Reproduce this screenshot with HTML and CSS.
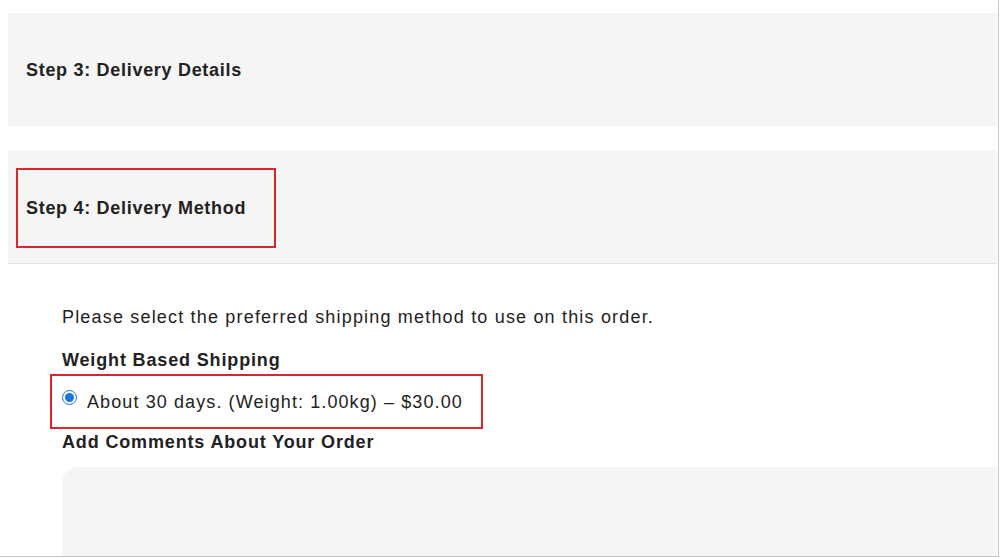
FILE: index.html
```html
<!DOCTYPE html>
<html>
<head>
<meta charset="utf-8">
<link rel="stylesheet" href="styles.css">
</head>
<body>
<div class="page">
  <div class="panel panel-step3">
    <h2 class="step-title">Step 3: Delivery Details</h2>
  </div>
  <div class="panel panel-step4">
    <div class="highlight highlight-title">
      <h2 class="step-title">Step 4: Delivery Method</h2>
    </div>
  </div>
  <div class="content">
    <p class="intro">Please select the preferred shipping method to use on this order.</p>
    <p class="label">Weight Based Shipping</p>
    <div class="highlight highlight-option">
      <label class="option"><input type="radio" name="ship" checked class="radio"><span>About 30 days. (Weight: 1.00kg) – $30.00</span></label>
    </div>
    <p class="label label-comments">Add Comments About Your Order</p>
    <div class="comments"></div>
  </div>
</div>
</body>
</html>
```

FILE: styles.css
```css
html, body {
  margin: 0;
  padding: 0;
  background: #ffffff;
}
body {
  font-family: "Liberation Sans", Arial, sans-serif;
  color: #222222;
}
.page {
  border-right: 1px solid #c8c8c8;
  border-bottom: 1px solid #c8c8c8;
  padding: 13px 1px 0 8px;
  box-sizing: border-box;
  width: 999px;
  height: 557px;
  overflow: hidden;
}
.panel {
  background: #f5f5f5;
  box-sizing: border-box;
}
.panel-step3 {
  height: 113px;
  display: flex;
  align-items: center;
  padding-left: 18px;
  margin-bottom: 24px;
}
.panel-step4 {
  height: 114px;
  padding: 18px 0 0 8px;
  border-bottom: 1px solid #e2e2e2;
}
.step-title {
  margin: 0;
  font-size: 18px;
  font-weight: bold;
  line-height: 24px;
  letter-spacing: 0.7px;
}
.highlight {
  border: 2px solid #d8262c;
  box-sizing: border-box;
}
.highlight-title {
  width: 260px;
  height: 80px;
  display: flex;
  align-items: center;
  padding-left: 8px;
}
.content {
  padding-left: 54px;
}
.intro {
  margin: 40px 0 0;
  font-size: 18px;
  line-height: 26px;
  letter-spacing: 1.18px;
}
.label {
  margin: 17px 0 0;
  font-size: 18px;
  font-weight: bold;
  line-height: 26px;
  letter-spacing: 0.85px;
}
.label-comments {
  margin-top: 0;
}
.highlight-option {
  width: 433px;
  height: 55px;
  margin: 1px 0 0 -12px;
  padding-left: 10px;
  display: flex;
  align-items: center;
}
.option {
  display: flex;
  align-items: center;
  font-size: 18px;
  line-height: 26px;
  letter-spacing: 1.1px;
}
.radio {
  width: 15px;
  height: 15px;
  margin: 0 10px 0 0;
  accent-color: #1a73e8;
  position: relative;
  top: -4px;
}
.comments {
  margin-top: 12px;
  height: 120px;
  background: #f5f5f5;
  border-top-left-radius: 16px;
}
```
